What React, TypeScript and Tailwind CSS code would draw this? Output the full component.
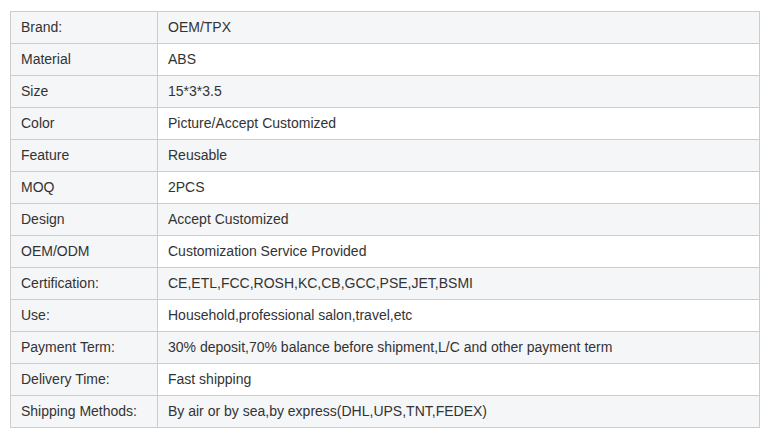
const specs: [string, string][] = [
  ['Brand:', 'OEM/TPX'],
  ['Material', 'ABS'],
  ['Size', '15*3*3.5'],
  ['Color', 'Picture/Accept Customized'],
  ['Feature', 'Reusable'],
  ['MOQ', '2PCS'],
  ['Design', 'Accept Customized'],
  ['OEM/ODM', 'Customization Service Provided'],
  ['Certification:', 'CE,ETL,FCC,ROSH,KC,CB,GCC,PSE,JET,BSMI'],
  ['Use:', 'Household,professional salon,travel,etc'],
  ['Payment Term:', '30% deposit,70% balance before shipment,L/C and other payment term'],
  ['Delivery Time:', 'Fast shipping'],
  ['Shipping Methods:', 'By air or by sea,by express(DHL,UPS,TNT,FEDEX)'],
];

export default function App() {
  return (
    <div className="w-[767px] h-[439px] bg-white pt-[11px] pl-[10px] font-['Liberation_Sans',Arial,sans-serif] text-[14px] text-[#333]">
      <div className="w-[750px] grid grid-cols-[146px_1fr] gap-px bg-[#cccccc] border border-[#cccccc]">
        {specs.map(([label, value], i) => (
          <div key={label} className="contents">
            <div className="h-[31px] flex items-center px-[10px] bg-[#f5f6f8]">{label}</div>
            <div className={`h-[31px] flex items-center px-[10px] ${i % 2 === 0 ? 'bg-[#f5f6f8]' : 'bg-white'}`}>
              {value}
            </div>
          </div>
        ))}
      </div>
    </div>
  );
}
